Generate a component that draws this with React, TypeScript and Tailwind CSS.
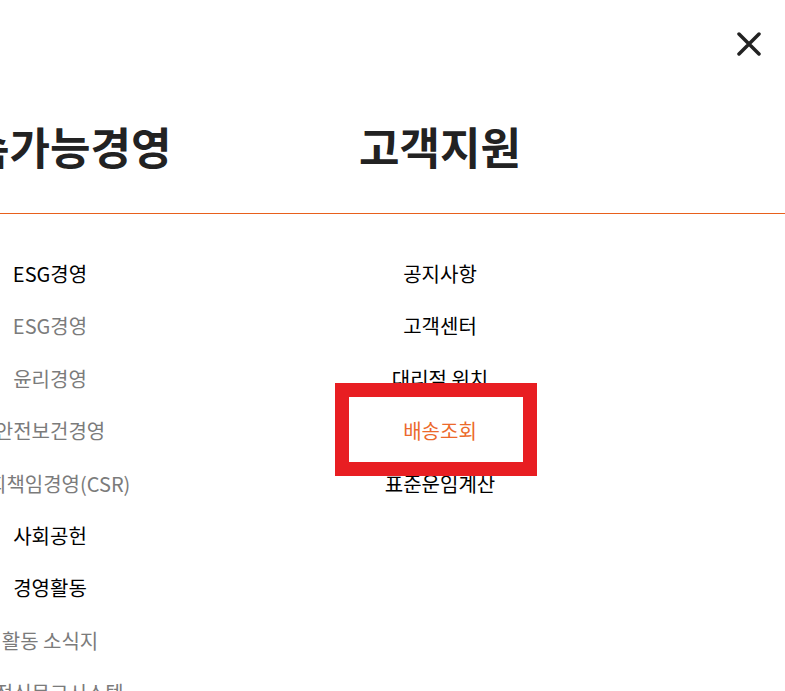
type Item = { label: string; tone: "dark" | "muted" | "active" };

const columns: { title: string; items: Item[] }[] = [
  {
    title: "지속가능경영",
    items: [
      { label: "ESG경영", tone: "dark" },
      { label: "ESG경영", tone: "muted" },
      { label: "윤리경영", tone: "muted" },
      { label: "안전보건경영", tone: "muted" },
      { label: "사회책임경영(CSR)", tone: "muted" },
      { label: "사회공헌", tone: "dark" },
      { label: "경영활동", tone: "dark" },
      { label: "활동 소식지", tone: "muted" },
      { label: "부정신문고시스템", tone: "muted" },
    ],
  },
  {
    title: "고객지원",
    items: [
      { label: "공지사항", tone: "dark" },
      { label: "고객센터", tone: "dark" },
      { label: "대리점 위치", tone: "dark" },
      { label: "배송조회", tone: "active" },
      { label: "표준운임계산", tone: "dark" },
    ],
  },
];

const toneClass = {
  dark: "text-[#000] font-normal",
  muted: "text-[#7b7b7b] font-normal",
  active: "text-[#ec6a2c] font-normal",
};

export default function App() {
  return (
    <div
      className="relative h-[691px] w-[785px] overflow-hidden bg-white"
      style={{ fontFamily: '"Noto Sans CJK KR", "Noto Sans", sans-serif' }}
    >
      <div className="flex justify-end pt-[32px] pr-[24px]">
        <button className="flex h-[24px] w-[24px] items-center justify-center text-[#222]">
          <svg width="24" height="24" viewBox="0 0 24 24" fill="none" stroke="currentColor" strokeWidth="3.5" strokeLinecap="round">
            <path d="M2 2L22 22M22 2L2 22" />
          </svg>
        </button>
      </div>

      <div className="mt-[68px] flex -ml-[145px]">
        {columns.map((col) => (
          <div key={col.title} className="w-[390px] shrink-0 text-center">
            <h2 className="whitespace-nowrap text-[44px] font-bold leading-[44px] text-[#222]">{col.title}</h2>
          </div>
        ))}
      </div>

      <div className="mt-[45px] h-px w-full bg-[#e8601c]" />

      <div className="mt-[47px] flex -ml-[145px]">
        {columns.map((col) => (
          <ul key={col.title} className="flex w-[390px] shrink-0 flex-col gap-[26.4px] text-center">
            {col.items.map((item, i) => (
              <li key={i} className={`whitespace-nowrap text-[20px] leading-[26px] ${toneClass[item.tone]}`}>
                {item.label}
              </li>
            ))}
          </ul>
        ))}
      </div>

      {/* highlight annotation */}
      <div className="pointer-events-none absolute left-[335px] top-[383px] h-[93px] w-[202px] border-[14px] border-[#e81e22]" />
    </div>
  );
}
